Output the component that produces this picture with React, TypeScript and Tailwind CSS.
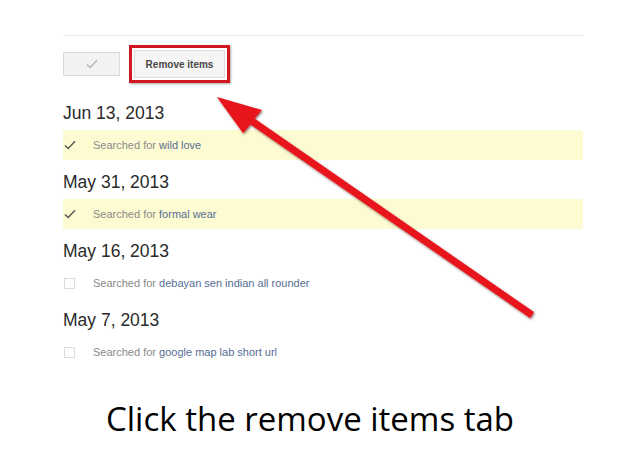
import React from "react";

function Check({ className = "" }: { className?: string }) {
  return (
    <svg width="12" height="10" viewBox="0 0 12 10" className={className}>
      <path d="M1 5.5 L4.2 8.5 L11 1.2" fill="none" stroke="currentColor" strokeWidth="1.4" />
    </svg>
  );
}

function Row({ query, checked }: { query: string; checked: boolean }) {
  return (
    <div className={`mt-[6px] flex h-[30px] items-center ${checked ? "bg-[#fdfbd1]" : ""}`}>
      <div className="flex w-[30px] items-center pl-[1px]">
        {checked ? (
          <Check className="text-[#555]" />
        ) : (
          <div className="h-[11px] w-[11px] border border-[#dcdcdc] bg-white" />
        )}
      </div>
      <div className="text-[11px] text-[#8a8a8a]">
        Searched for <span className="text-[#566d94]">{query}</span>
      </div>
    </div>
  );
}

function Section({ date, query, checked, first }: { date: string; query: string; checked: boolean; first?: boolean }) {
  return (
    <div className={first ? "mt-[19px]" : "mt-[11px]"}>
      <div className="h-[22px] text-[17.5px] leading-[22px] text-[#2a2a2a]">{date}</div>
      <Row query={query} checked={checked} />
    </div>
  );
}

export default function App() {
  return (
    <div
      className="relative h-[465px] w-[620px] overflow-hidden bg-white"
      style={{ fontFamily: '"Liberation Sans", Arial, sans-serif' }}
    >
      <div className="pl-[63px] pr-[37px] pt-[35px]">
        <div className="h-px bg-[#ececec]" />
        <div className="mt-[9px] flex items-center">
          <div className="flex h-[24px] w-[57px] items-center justify-center border border-[#dadada] bg-[#f2f2f2]">
            <Check className="text-[#b5b5b5]" />
          </div>
          <div className="ml-[9px] border-[3px] border-[#cf1820] p-[2px] shadow-[1px_1px_2px_rgba(0,0,0,0.35)]">
            <div className="flex h-[28px] w-[91px] items-center justify-center border border-[#dcdcdc] bg-[#f5f5f5] text-[10px] font-bold text-[#484848]">
              Remove items
            </div>
          </div>
        </div>
        <Section first date="Jun 13, 2013" query="wild love" checked />
        <Section date="May 31, 2013" query="formal wear" checked />
        <Section date="May 16, 2013" query="debayan sen indian all rounder" checked={false} />
        <Section date="May 7, 2013" query="google map lab short url" checked={false} />
      </div>
      <div
        className="mt-[32px] text-center text-[33px] leading-[40px] text-black"
        style={{ fontFamily: '"Open Sans", sans-serif' }}
      >
        Click the remove items tab
      </div>
      <svg className="pointer-events-none absolute left-0 top-0" width="620" height="465" viewBox="0 0 620 465">
        <defs>
          <filter id="sh" x="-10%" y="-10%" width="120%" height="120%">
            <feDropShadow dx="1" dy="1.5" stdDeviation="1.2" floodColor="#400" floodOpacity="0.55" />
          </filter>
        </defs>
        <polygon
          points="217,97 262,110 254.5,118.6 534,312.1 530,317.9 250.5,124.4 243,133"
          fill="#e8121a"
          filter="url(#sh)"
          strokeLinejoin="round"
        />
      </svg>
    </div>
  );
}
